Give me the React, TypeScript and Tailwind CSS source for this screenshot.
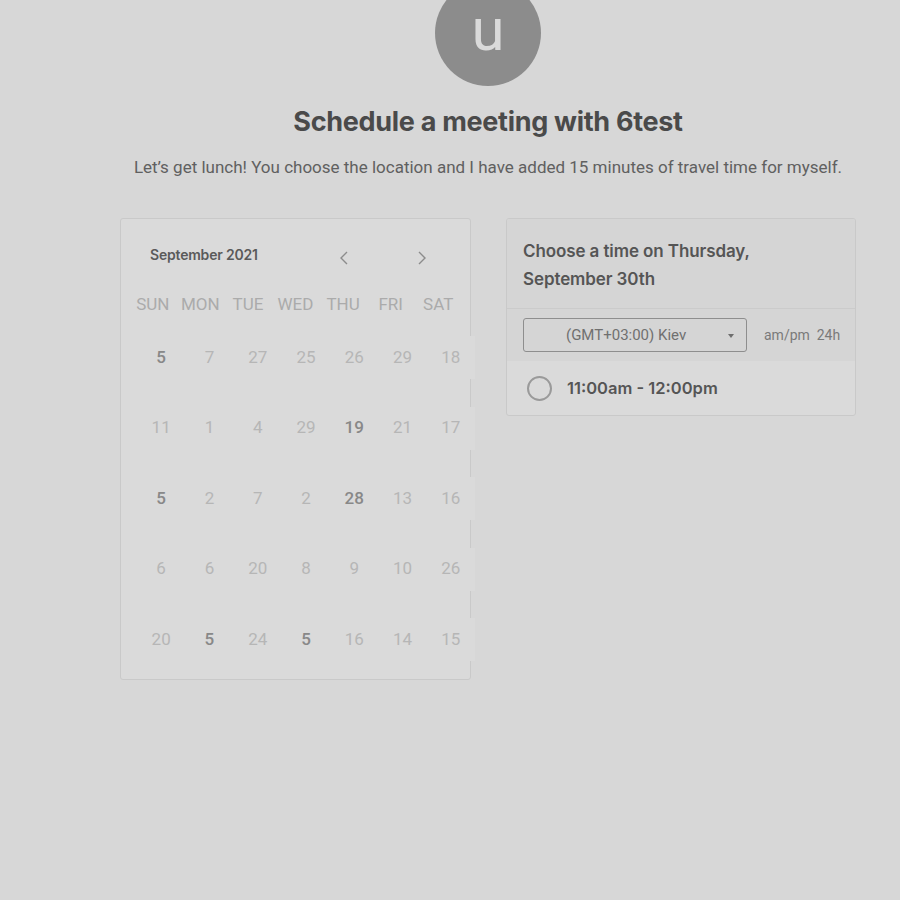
import React from 'react';

const weekdays = ['SUN', 'MON', 'TUE', 'WED', 'THU', 'FRI', 'SAT'];

// [value, available]
const weeks: [string, boolean][][] = [
  [['5', true], ['7', false], ['27', false], ['25', false], ['26', false], ['29', false], ['18', false]],
  [['11', false], ['1', false], ['4', false], ['29', false], ['19', true], ['21', false], ['17', false]],
  [['5', true], ['2', false], ['7', false], ['2', false], ['28', true], ['13', false], ['16', false]],
  [['6', false], ['6', false], ['20', false], ['8', false], ['9', false], ['10', false], ['26', false]],
  [['20', false], ['5', true], ['24', false], ['5', true], ['16', false], ['14', false], ['15', false]],
];

const Chevron: React.FC<{ dir: 'left' | 'right' }> = ({ dir }) => (
  <svg width="10" height="16" viewBox="0 0 10 16" fill="none" stroke="#8c8c8c" strokeWidth="1.4">
    {dir === 'left' ? <path d="M8 2 L2 8 L8 14" /> : <path d="M2 2 L8 8 L2 14" />}
  </svg>
);

const App: React.FC = () => {
  return (
    <div className="min-h-[900px] w-full bg-[#d7d7d7] overflow-hidden" style={{ fontFamily: 'Roboto, "Liberation Sans", sans-serif' }}>
      <div className="w-[736px] ml-[120px] flex flex-col items-center">
        {/* Avatar */}
        <div className="-mt-[20px] w-[106px] h-[106px] rounded-full bg-[#8c8c8c] flex items-center justify-center">
          <span className="text-[60px] leading-[40px] text-[#dadada] mb-[6px]">u</span>
        </div>

        {/* Title */}
        <h1 className="mt-[18px] text-[27px] leading-[36px] font-bold text-[#4a4a4a] tracking-[-0.3px]" style={{ fontFamily: 'Inter, "Liberation Sans", sans-serif' }}>
          Schedule a meeting with 6test
        </h1>
        <p className="mt-[15px] text-[17px] leading-[24px] text-[#606060] whitespace-nowrap">
          Let’s get lunch! You choose the location and I have added 15 minutes of travel time for myself.
        </p>

        <div className="mt-[39px] w-full flex items-start gap-[35px]">
          {/* Calendar */}
          <div className="w-[351px] border border-[#c9c9c9] rounded-[3px] bg-[#dadada] pt-[25px] pb-[18px]">
            <div className="flex items-center pl-[29px] h-[20px]">
              <span className="text-[14px] font-semibold text-[#5a5a5a] tracking-[-0.2px]" style={{ fontFamily: 'Inter, "Liberation Sans", sans-serif' }}>
                September 2021
              </span>
              <div className="ml-[81px] mt-[8px] flex items-center gap-[68px]">
                <Chevron dir="left" />
                <Chevron dir="right" />
              </div>
            </div>
            <div className="mt-[28px] ml-[8px] grid grid-cols-7 w-[333px]">
              {weekdays.map((d) => (
                <div key={d} className="text-center text-[17px] leading-[24px] text-[#ababab]">
                  {d}
                </div>
              ))}
            </div>
            <div className="mt-[20px] ml-[16px] w-[338px] flex flex-col gap-[27.5px]">
              {weeks.map((week, wi) => (
                <div key={wi} className="grid grid-cols-7">
                  {week.map(([n, avail], di) => (
                    <div
                      key={di}
                      className={`h-[43px] flex items-center justify-center bg-[#dadada] text-[17px] ${
                        avail ? 'text-[#888888] font-medium' : 'text-[#b6b6b6]'
                      }`}
                    >
                      {n}
                    </div>
                  ))}
                </div>
              ))}
            </div>
          </div>

          {/* Time slots */}
          <div className="w-[350px] border border-[#c9c9c9] rounded-[3px] bg-[#dadada] overflow-hidden">
            <div className="bg-[#d5d5d5] border-b border-[#cbcbcb] pl-[16px] pt-[18px] pb-[15px]">
              <h2 className="text-[17px] leading-[28px] font-semibold text-[#555555] tracking-[-0.1px]" style={{ fontFamily: 'Inter, "Liberation Sans", sans-serif' }}>
                Choose a time on Thursday,
                <br />
                September 30th
              </h2>
            </div>
            <div className="bg-[#d5d5d5] flex items-center pl-[16px] h-[52px]">
              <div className="relative w-[224px] h-[34px] border border-[#8e8e8e] rounded-[3px] flex items-center">
                <span className="ml-[42px] text-[15px] text-[#707070]">(GMT+03:00) Kiev</span>
                <span className="absolute right-[12px] top-[15px] w-0 h-0 border-l-[3.5px] border-r-[3.5px] border-t-[4px] border-l-transparent border-r-transparent border-t-[#6e6e6e]" />
              </div>
              <span className="ml-[17px] text-[14px] text-[#7a7a7a] whitespace-pre">am/pm  24h</span>
            </div>
            <div className="flex items-center h-[54px] pl-[20px]">
              <div className="w-[25px] h-[25px] rounded-full border-2 border-[#9a9a9a]" />
              <span className="ml-[15px] text-[16.5px] font-semibold text-[#555555]" style={{ fontFamily: 'Inter, "Liberation Sans", sans-serif' }}>
                11:00am - 12:00pm
              </span>
            </div>
          </div>
        </div>
      </div>
    </div>
  );
};

export default App;
